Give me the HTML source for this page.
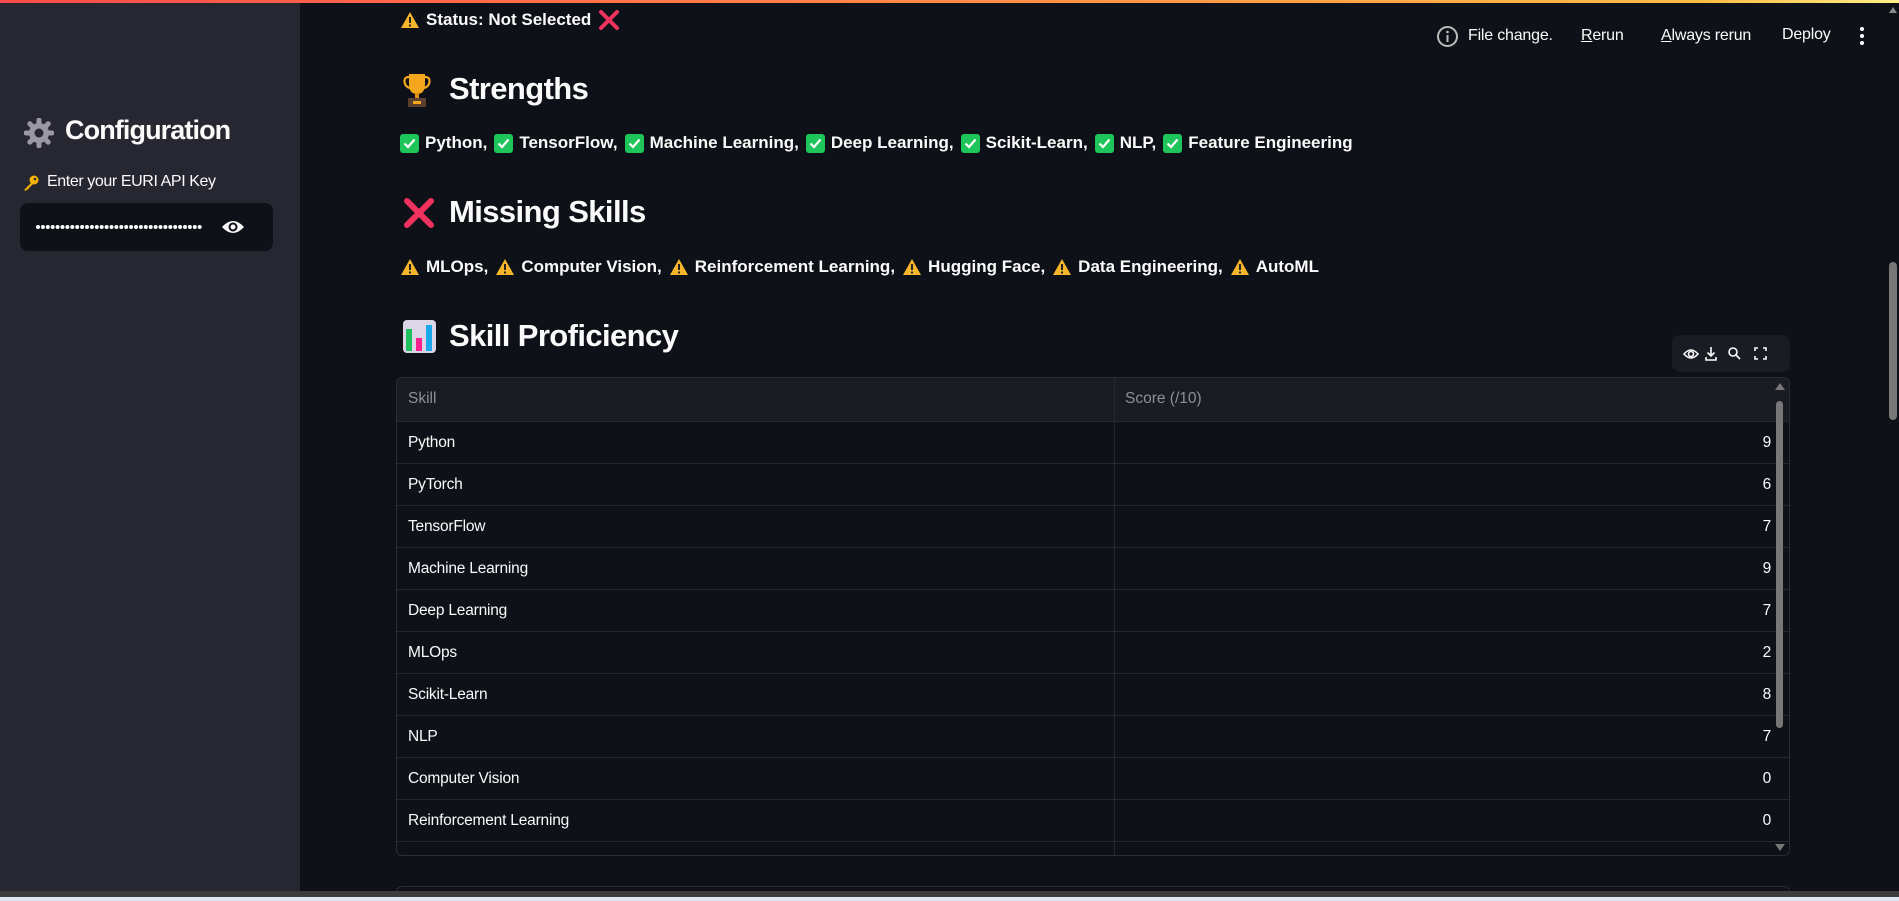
<!DOCTYPE html>
<html><head><meta charset="utf-8"><style>
*{margin:0;padding:0;box-sizing:border-box}
body{width:1899px;height:901px;overflow:hidden;background:#0e1117;font-family:"Liberation Sans",sans-serif;color:#fafafa;position:relative}
.topbar{position:absolute;top:0;left:0;width:1899px;height:3px;background:linear-gradient(90deg,#ff4b4b,#ffbd45 90%,#fff08a)}
.side{position:absolute;top:3px;left:0;width:300px;height:888px;background:#262730}
.abs{position:absolute;white-space:nowrap}
.h{font-weight:bold;font-size:31px;letter-spacing:-0.6px}
.it{font-weight:bold;font-size:17px;letter-spacing:0px;display:flex;align-items:center}
.it svg{margin-right:6px;flex:none}
.it span{margin-right:7px}
.hdr{font-size:16px;color:#fafafa;letter-spacing:-0.2px}
.tbl{position:absolute;left:396px;top:377px;width:1394px;height:479px;border:1px solid #2b2d36;border-radius:6px;overflow:hidden;background:#0e1117}
.row{position:absolute;left:0;width:1392px;height:42px;border-top:1px solid #262730;font-size:15.5px;letter-spacing:-0.2px}
.row .a{position:absolute;left:11px;top:12px}
.row .b{position:absolute;right:18px;top:12px}
</style></head><body>
<div class="topbar"></div>
<div class="side"></div>
<svg class="abs" style="left:24px;top:118px" width="30" height="30" viewBox="0 0 30 30"><g fill="#9a98a4"><circle cx="15" cy="15" r="10"/><g stroke="#9a98a4" stroke-width="5" stroke-linecap="round"><line x1="15" y1="2" x2="15" y2="28"/><line x1="2" y1="15" x2="28" y2="15"/><line x1="5.8" y1="5.8" x2="24.2" y2="24.2"/><line x1="24.2" y1="5.8" x2="5.8" y2="24.2"/></g></g><circle cx="15" cy="15" r="4.5" fill="#262730"/></svg>
<div class="abs" style="left:65px;top:115px;font-size:27px;font-weight:bold;letter-spacing:-0.9px">Configuration</div>
<svg class="abs" style="left:22px;top:174px" width="18" height="18" viewBox="0 0 18 18"><circle cx="12" cy="6" r="4.5" fill="#f4b400"/><circle cx="13" cy="5" r="1.3" fill="#262730"/><path d="M9 9 L2 16 L4 17 L5 15 L6 16 L7 14 L11 10Z" fill="#f4b400"/></svg>
<div class="abs" style="left:47px;top:173px;font-size:16px;letter-spacing:-0.4px">Enter your EURI API Key</div>
<div class="abs" style="left:20px;top:203px;width:253px;height:48px;background:#0e1117;border-radius:8px"></div>
<svg class="abs" style="left:36px;top:224px" width="170" height="6"><g fill="#fafafa" id="dots"></g></svg>
<svg class="abs" style="left:221px;top:217px" width="24" height="20" viewBox="0 0 24 20"><path d="M1 10 Q12 -2 23 10 Q12 22 1 10Z" fill="#fafafa"/><circle cx="12" cy="10" r="4.5" fill="#0e1117"/><circle cx="12" cy="10" r="2.5" fill="#fafafa"/></svg>
<svg class="abs" style="left:1436px;top:25px" width="23" height="23" viewBox="0 0 23 23"><circle cx="11.5" cy="11.5" r="9.5" fill="none" stroke="#bbb" stroke-width="2"/><rect x="10.5" y="10" width="2" height="7" fill="#bbb"/><circle cx="11.5" cy="7" r="1.3" fill="#bbb"/></svg>
<div class="abs hdr" style="left:1468px;top:27px">File change.</div>
<div class="abs hdr" style="left:1581px;top:27px"><u>R</u>erun</div>
<div class="abs hdr" style="left:1661px;top:27px"><u>A</u>lways rerun</div>
<div class="abs hdr" style="left:1782px;top:26px">Deploy</div>
<svg class="abs" style="left:1858px;top:26px" width="8" height="20"><circle cx="4" cy="3" r="2" fill="#fafafa"/><circle cx="4" cy="10" r="2" fill="#fafafa"/><circle cx="4" cy="17" r="2" fill="#fafafa"/></svg>
<div class="abs it" style="left:400px;top:9px">
<svg width="20" height="18" viewBox="0 0 20 18"><path d="M10 1 L19 17 L1 17Z" fill="#f7b52c"/><rect x="9" y="6" width="2" height="6" fill="#222"/><rect x="9" y="13.5" width="2" height="2" fill="#222"/></svg>
<span>Status: Not Selected</span>
<svg width="22" height="22" viewBox="0 0 22 22"><path d="M3 3 L19 19 M19 3 L3 19" stroke="#f0325e" stroke-width="4" stroke-linecap="round"/></svg></div>
<svg class="abs" style="left:402px;top:72px" width="30" height="36" viewBox="0 0 30 36"><path d="M7 2 H23 V12 Q23 22 15 22 Q7 22 7 12Z" fill="#f4a71c"/><path d="M7 5 Q1 5 3 12 Q5 16 9 16 M23 5 Q29 5 27 12 Q25 16 21 16" fill="none" stroke="#f4a71c" stroke-width="2.2"/><rect x="13" y="21" width="4" height="5" fill="#e09015"/><rect x="6" y="26" width="18" height="9" rx="1" fill="#5b4030"/><rect x="11" y="29" width="8" height="3" fill="#f4a71c"/></svg>
<div class="abs h" style="left:449px;top:71px">Strengths</div>
<div class="abs it" style="left:400px;top:133px" id="s1"></div>
<svg class="abs" style="left:402px;top:196px" width="34" height="34" viewBox="0 0 34 34"><path d="M5 5 L29 29 M29 5 L5 29" stroke="#f0325e" stroke-width="6" stroke-linecap="round"/></svg>
<div class="abs h" style="left:449px;top:194px">Missing Skills</div>
<div class="abs it" style="left:400px;top:257px" id="s2"></div>
<svg class="abs" style="left:403px;top:320px" width="33" height="33" viewBox="0 0 33 33"><rect width="33" height="33" rx="4" fill="#dcd6e6"/><rect x="3" y="9" width="6" height="22" fill="#20c060"/><rect x="13" y="18" width="6" height="13" fill="#ff1f8e"/><rect x="23" y="5" width="6" height="26" fill="#1aa7ec"/></svg>
<div class="abs h" style="left:449px;top:318px">Skill Proficiency</div>
<div class="abs" style="left:1672px;top:335px;width:118px;height:37px;background:#1a1c24;border-radius:8px"></div>
<svg class="abs" style="left:1682px;top:344px" width="100" height="20" viewBox="0 0 100 20" fill="none" stroke="#fafafa" stroke-width="1.6"><path d="M2 10 Q9 2 16 10 Q9 18 2 10Z"/><circle cx="9" cy="10" r="2.5"/><path d="M29 3 V12 M25.5 8.5 L29 12 L32.5 8.5 M24 13 V16 H34 V13"/><circle cx="51" cy="8" r="4"/><path d="M54 11 L58 15"/><path d="M73 7 V4 H76 M81 4 H84 V7 M84 12 V15 H81 M76 15 H73 V12"/></svg>
<div class="tbl">
<div style="position:absolute;left:0;top:0;width:1392px;height:43px;background:#1a1c24"></div>
<div style="position:absolute;left:11px;top:12px;font-size:15.5px;color:#8e8f96">Skill</div>
<div style="position:absolute;left:728px;top:12px;font-size:15.5px;color:#8e8f96">Score (/10)</div>
<div style="position:absolute;left:717px;top:0;width:1px;height:479px;background:#262730"></div>
<div id="rows"></div>
<div style="position:absolute;left:1378px;top:5px;width:0;height:0;border-left:5px solid transparent;border-right:5px solid transparent;border-bottom:7px solid #777"></div>
<div style="position:absolute;left:1379px;top:23px;width:7px;height:327px;background:#777;border-radius:4px"></div>
<div style="position:absolute;left:1378px;top:466px;width:0;height:0;border-left:5px solid transparent;border-right:5px solid transparent;border-top:7px solid #777"></div>
</div>
<div class="abs" style="left:396px;top:886px;width:1394px;height:10px;border:1px solid #2b2d36;border-bottom:none;border-radius:6px 6px 0 0"></div>
<div class="abs" style="left:1889px;top:7px;width:0;height:0;border-left:4px solid transparent;border-right:4px solid transparent;border-bottom:6px solid #888"></div>
<div class="abs" style="left:1889px;top:262px;width:8px;height:158px;background:#777;border-radius:4px"></div>
<div class="abs" style="left:0;top:891px;width:1899px;height:6px;background:#3c3c3c"></div>
<div class="abs" style="left:0;top:897px;width:1899px;height:4px;background:#dfe6f3"></div>
<script>
var g='';for(var i=0;i<34;i++){g+='<circle cx="'+(2+i*4.9)+'" cy="3" r="2"/>'}document.getElementById('dots').innerHTML=g;
var ck='<svg width="19" height="19" viewBox="0 0 19 19"><rect width="19" height="19" rx="3" fill="#1ec55a"/><path d="M4.5 9.5 L8 13 L14.5 5.5" stroke="#fff" stroke-width="2.2" fill="none"/></svg>';
var wn='<svg width="20" height="18" viewBox="0 0 20 18"><path d="M10 1 L19 17 L1 17Z" fill="#f7b52c"/><rect x="9" y="6" width="2" height="6" fill="#222"/><rect x="9" y="13.5" width="2" height="2" fill="#222"/></svg>';
function f(id,ic,arr){document.getElementById(id).innerHTML=arr.map(function(s,i){return ic+'<span>'+s+(i<arr.length-1?',':'')+'</span>'}).join('')}
f('s1',ck,['Python','TensorFlow','Machine Learning','Deep Learning','Scikit-Learn','NLP','Feature Engineering']);
f('s2',wn,['MLOps','Computer Vision','Reinforcement Learning','Hugging Face','Data Engineering','AutoML']);
var d=[['Python',9],['PyTorch',6],['TensorFlow',7],['Machine Learning',9],['Deep Learning',7],['MLOps',2],['Scikit-Learn',8],['NLP',7],['Computer Vision',0],['Reinforcement Learning',0],['',''] ];
document.getElementById('rows').innerHTML=d.map(function(r,i){return '<div class="row" style="top:'+(43+i*42)+'px"><div class="a">'+r[0]+'</div><div class="b">'+r[1]+'</div></div>'}).join('');
</script>
</body></html>
